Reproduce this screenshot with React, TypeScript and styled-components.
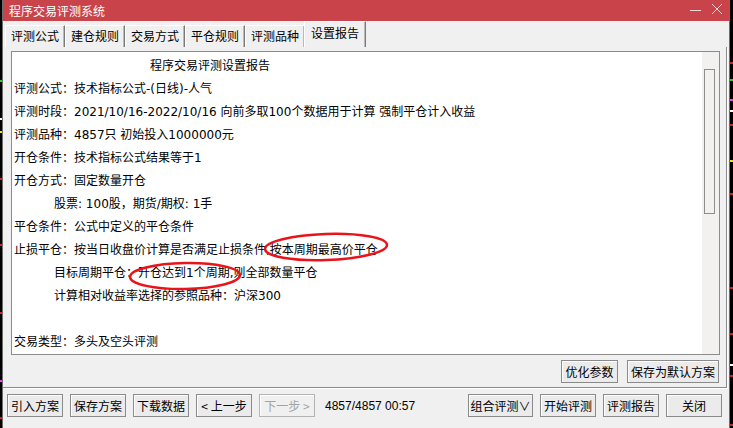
import React from "react";
import styled, { createGlobalStyle } from "styled-components";

const GlobalStyle = createGlobalStyle`
  html, body {
    margin: 0;
    padding: 0;
    background: #000;
  }
  body {
    font-family: "Noto Sans CJK SC", sans-serif;
    font-size: 12px;
    color: #000;
  }
`;

const tabs = ["评测公式", "建仓规则", "交易方式", "平仓规则", "评测品种", "设置报告"];

type Line = { text: string; kind?: "title" | "indent" };

const reportLines: Line[] = [
  { text: "程序交易评测设置报告", kind: "title" },
  { text: "评测公式：技术指标公式-(日线)-人气" },
  { text: "评测时段：2021/10/16-2022/10/16 向前多取100个数据用于计算 强制平仓计入收益" },
  { text: "评测品种：4857只 初始投入1000000元" },
  { text: "开仓条件：技术指标公式结果等于1" },
  { text: "开仓方式：固定数量开仓" },
  { text: "股票: 100股，期货/期权: 1手", kind: "indent" },
  { text: "平仓条件：公式中定义的平仓条件" },
  { text: "止损平仓：按当日收盘价计算是否满足止损条件,按本周期最高价平仓" },
  { text: "目标周期平仓：开仓达到1个周期,则全部数量平仓", kind: "indent" },
  { text: "计算相对收益率选择的参照品种：沪深300", kind: "indent" },
  { text: "" },
  { text: "交易类型：多头及空头评测" },
];

const leftButtons = [
  { label: "引入方案" },
  { label: "保存方案" },
  { label: "下载数据" },
  { label: "< 上一步" },
  { label: "下一步 >", disabled: true },
];

const rightButtons = [
  { label: "组合评测∨", w: 65 },
  { label: "开始评测", w: 56 },
  { label: "评测报告", w: 56 },
  { label: "关闭", w: 56 },
];

// little bits of the chart that peeks out behind the dialog
const leftMarks = [
  { y: 80, c: "#22d322" },
  { y: 118, c: "#ffffff" },
  { y: 131, c: "#e6e600" },
  { y: 178, c: "#d42020" },
  { y: 244, c: "#d42020" },
  { y: 312, c: "#d42020" },
  { y: 380, c: "#ff33ff" },
  { y: 417, c: "#d42020" },
];

const rightMarks = [
  { y: 62, c: "#d42020" },
  { y: 79, c: "#22d322" },
  { y: 99, c: "#ff33ff" },
  { y: 110, c: "#ffffff" },
  { y: 124, c: "#d42020" },
  { y: 160, c: "#e6e600" },
  { y: 193, c: "#d42020" },
  { y: 287, c: "#d42020" },
  { y: 333, c: "#d42020" },
  { y: 364, c: "#ffffff" },
  { y: 375, c: "#d42020" },
  { y: 424, c: "#d42020" },
];

const ChartStrip: React.FC<{ width: number; marks: { y: number; c: string }[] }> = ({
  width,
  marks,
}) => (
  <svg width={width} height={428} style={{ display: "block", flexShrink: 0 }}>
    {marks.map((m, i) => (
      <rect key={i} x={0} y={m.y} width={width} height={2} fill={m.c} />
    ))}
  </svg>
);

const App: React.FC = () => {
  return (
    <Screen>
      <GlobalStyle />
      <ChartStrip width={2} marks={leftMarks} />
      <Dialog>
        <TitleBar>
          <TitleText>程序交易评测系统</TitleText>
          <WinControls>
            <svg width="12" height="12" viewBox="0 0 12 12">
              <line x1="0" y1="7.5" x2="11" y2="7.5" stroke="#f4d6d8" strokeWidth="1" />
            </svg>
            <svg width="12" height="12" viewBox="0 0 12 12">
              <path d="M1 1 L11 11 M11 1 L1 11" stroke="#f4d6d8" strokeWidth="1" />
            </svg>
          </WinControls>
        </TitleBar>

        <TabStrip>
          {tabs.map((t, i) => (
            <Tab key={t} $active={i === tabs.length - 1}>
              {t}
            </Tab>
          ))}
        </TabStrip>

        <Panel>
          <ReportBox>
            <ReportText>
              {reportLines.map((l, i) => (
                <ReportLine key={i} $kind={l.kind}>
                  {l.text}
                </ReportLine>
              ))}
            </ReportText>
            <ScrollTrack>
              <ScrollThumb />
            </ScrollTrack>
            <Marks viewBox="0 0 705 302">
              <ellipse
                cx="314"
                cy="195"
                rx="61"
                ry="13"
                transform="rotate(-2 314 195)"
                fill="none"
                stroke="#e8141a"
                strokeWidth="2.5"
              />
              <ellipse
                cx="173"
                cy="224"
                rx="55"
                ry="13"
                transform="rotate(-1 173 224)"
                fill="none"
                stroke="#e8141a"
                strokeWidth="2.5"
              />
            </Marks>
          </ReportBox>
          <PanelActions>
            <Button $w={57}>优化参数</Button>
            <Button $w={92}>保存为默认方案</Button>
          </PanelActions>
        </Panel>

        <BottomBar>
          <ButtonGroup>
            {leftButtons.map((b) => (
              <Button key={b.label} $w={56} $disabled={b.disabled}>
                {b.label}
              </Button>
            ))}
            <Status>4857/4857 00:57</Status>
          </ButtonGroup>
          <ButtonGroup>
            {rightButtons.map((b) => (
              <Button key={b.label} $w={b.w}>
                {b.label}
              </Button>
            ))}
          </ButtonGroup>
        </BottomBar>
      </Dialog>
      <ChartStrip width={3} marks={rightMarks} />
    </Screen>
  );
};

export default App;

const Screen = styled.div`
  width: 733px;
  height: 428px;
  display: flex;
  background: #000;
  overflow: hidden;
`;

const Dialog = styled.div`
  width: 728px;
  height: 428px;
  display: flex;
  flex-direction: column;
  background: #f0f0f0;
  box-sizing: border-box;
  border-left: 1px solid #6d6d6d;
  border-right: 1px solid #6d6d6d;
`;

const TitleBar = styled.div`
  height: 21px;
  flex-shrink: 0;
  background: #c8434a;
  display: flex;
  align-items: center;
  justify-content: space-between;
  padding: 0 6px 0 6px;
`;

const TitleText = styled.div`
  color: #ffffff;
  font-size: 12px;
  line-height: 21px;
`;

const WinControls = styled.div`
  display: flex;
  gap: 9px;
  align-items: center;
  margin-bottom: 3px;
`;

const TabStrip = styled.div`
  height: 26px;
  flex-shrink: 0;
  display: flex;
  align-items: flex-end;
  padding-left: 2px;
`;

const Tab = styled.div<{ $active?: boolean }>`
  box-sizing: border-box;
  width: ${(p) => (p.$active ? "62px" : "60px")};
  height: ${(p) => (p.$active ? "26px" : "22px")};
  margin-left: ${(p) => (p.$active ? "-1px" : "0")};
  padding-top: ${(p) => (p.$active ? "2px" : "1px")};
  text-align: center;
  line-height: 18px;
  font-size: 12px;
  background: #f0f0f0;
  border-top: 1px solid #ffffff;
  border-left: 1px solid #ffffff;
  border-right: 1px solid #7a7a7a;
  box-shadow: inset -1px 0 0 #b9b9b9;
  position: relative;
  z-index: ${(p) => (p.$active ? 1 : 0)};
`;

const Panel = styled.div`
  height: 341px;
  flex-shrink: 0;
  margin-right: 2px;
  box-sizing: border-box;
  padding: 4px 6px 0 8px;
  border-right: 1px solid #8a8a8a;
  border-bottom: 1px solid #8a8a8a;
  box-shadow: 1px 1px 0 #ffffff;
  display: flex;
  flex-direction: column;
`;

const ReportBox = styled.div`
  position: relative;
  height: 304px;
  box-sizing: border-box;
  border: 1px solid #8c8c8c;
  background: #ffffff;
  display: flex;
  overflow: hidden;
`;

const ReportText = styled.div`
  flex: 1;
  padding: 3px 0 0 2px;
  font-family: "DejaVu Sans", "Noto Sans CJK SC", sans-serif;
  font-size: 12px;
  white-space: pre;
`;

const ReportLine = styled.div<{ $kind?: "title" | "indent" }>`
  height: 23px;
  line-height: 23px;
  padding-left: ${(p) =>
    p.$kind === "title" ? "136px" : p.$kind === "indent" ? "40px" : "0"};
`;

const ScrollTrack = styled.div`
  width: 17px;
  flex-shrink: 0;
  background: #f2f1f0;
  padding: 17px 0 0 2px;
  box-sizing: border-box;
`;

const ScrollThumb = styled.div`
  width: 11px;
  height: 145px;
  box-sizing: border-box;
  border: 1px solid #8d8d8d;
  background: #f2f1f0;
`;

const Marks = styled.svg`
  position: absolute;
  left: 0;
  top: 0;
  width: 705px;
  height: 302px;
  pointer-events: none;
  overflow: visible;
`;

const PanelActions = styled.div`
  display: flex;
  justify-content: flex-end;
  gap: 9px;
  margin-top: 5px;
  padding-right: 1px;
`;

const Button = styled.div<{ $w: number; $disabled?: boolean }>`
  box-sizing: border-box;
  width: ${(p) => p.$w}px;
  height: 23px;
  display: flex;
  align-items: center;
  justify-content: center;
  white-space: pre;
  font-size: 12px;
  color: ${(p) => (p.$disabled ? "#a3a3a3" : "#000")};
  background: ${(p) => (p.$disabled ? "#f0f0f0" : "#ebebeb")};
  border: 1px solid ${(p) => (p.$disabled ? "#b4b4b4" : "#8a8a8a")};
  box-shadow: inset 1px 1px 0 #ffffff;
`;

const BottomBar = styled.div`
  flex: 1;
  display: flex;
  justify-content: space-between;
  align-items: flex-start;
  padding: 6px 7px 0 4px;
`;

const ButtonGroup = styled.div`
  display: flex;
  align-items: center;
  gap: 7px;
`;

const Status = styled.div`
  font-family: "Liberation Sans", Arial, sans-serif;
  font-size: 12px;
  margin-left: 3px;
  white-space: pre;
`;
